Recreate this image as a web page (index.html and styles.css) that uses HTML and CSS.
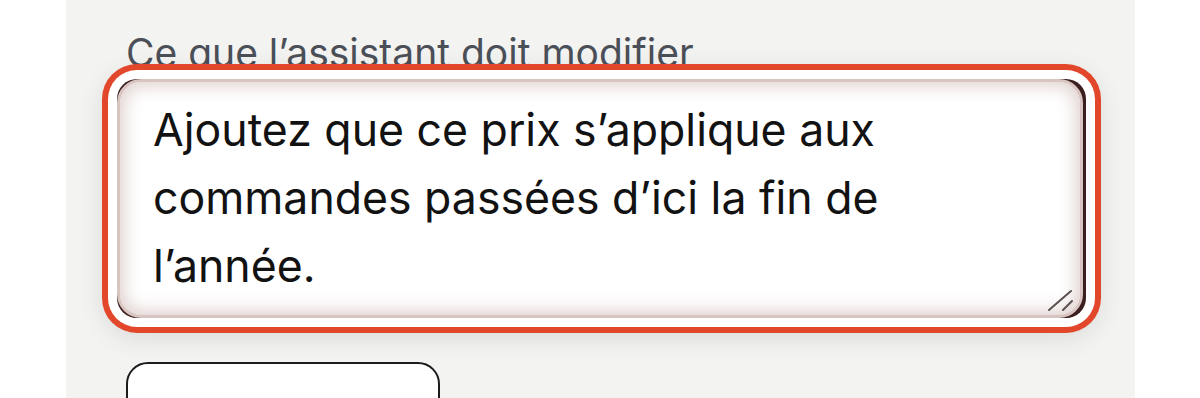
FILE: index.html
```html
<!DOCTYPE html>
<html>
<head>
  <title>Modifier la réponse</title>
  <link rel="stylesheet" href="styles.css">
</head>
<body>
  <div class="panel">
    <label class="field-label" for="edit">Ce que l’assistant doit modifier</label>
    <div class="field">
      <textarea id="edit" class="field-input">Ajoutez que ce prix s’applique aux commandes passées d’ici la fin de l’année.</textarea>
      <!-- resize grip -->
      <svg class="grip" width="26" height="24" viewBox="0 0 26 24">
        <line x1="2" y1="22" x2="24" y2="3" stroke="#5a5050" stroke-width="2" stroke-linecap="round"/>
        <line x1="16" y1="22" x2="25" y2="13" stroke="#5a5050" stroke-width="2" stroke-linecap="round"/>
      </svg>
    </div>
    <button class="button-outline" type="button"></button>
  </div>
</body>
</html>
```

FILE: styles.css
```css
body {
  background-color: #fff;
  margin: 0;
  padding: 0;
  font-family: Inter, "Noto Sans", sans-serif;
}

/* Grey card the form sits in */
.panel {
  width: 1009px;
  height: 369px;
  margin-left: 66px;
  padding: 29px 0 0 60px;
  background-color: #f3f3f1;
  overflow: hidden;
}

.field-label {
  display: block;
  font-size: 39px;
  line-height: 47px;
  color: #4b4f58;
  margin-bottom: 3px;
}

/* Textarea wrapper, carries the focus ring */
.field {
  position: relative;
  margin: 0 -9px;
  width: 969px;
  border-radius: 20px;
  background-color: #3b1e1e;
  box-shadow:
    0 0 0 9px #fff,
    0 0 0 15px #e2472b,
    0 6px 26px 14px rgba(0, 0, 0, 0.1);
}

.field-input {
  display: block;
  width: 966px;
  height: 239px;
  margin: 0;
  padding: 14px 60px 16px 33px;
  box-sizing: border-box;
  border: 3px solid #d8c5c1;
  border-radius: 24px;
  background-color: #fff;
  box-shadow: inset 0 0 18px 3px rgba(150, 100, 92, 0.33);
  font-family: Inter, "Noto Sans", sans-serif;
  font-size: 44.6px;
  line-height: 68px;
  color: #121212;
  resize: none;
  outline: none;
  overflow: hidden;
}

.grip {
  position: absolute;
  right: 13px;
  bottom: 6px;
}

.button-outline {
  display: block;
  margin-top: 44px;
  width: 314px;
  height: 60px;
  border: 2px solid #1c1c1c;
  border-radius: 22px;
  background-color: #fff;
}
```
